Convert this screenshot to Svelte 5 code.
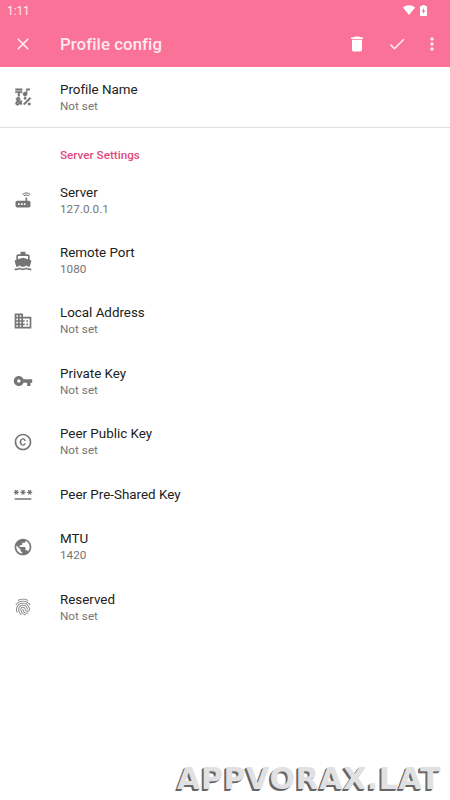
<script>
    const icons = {
        symbols: "M3 2h8v2H3zM6 11h2V7h3V5H3v2h3zM12.404 20.182l7.778-7.778 1.414 1.414-7.778 7.778zM14.5 12a1.5 1.5 0 1 0 0 3 1.5 1.5 0 0 0 0-3zM19.5 19a1.5 1.5 0 1 0 0 3 1.5 1.5 0 0 0 0-3zM14.5 11c1.38 0 2.5-1.12 2.5-2.5V4h3V2h-4v4.51c-.42-.32-.93-.51-1.5-.51C13.12 6 12 7.12 12 8.5s1.12 2.5 2.5 2.5zM9.74 15.96l-1.41 1.41-.71-.71.35-.35c.98-.98.98-2.56 0-3.54-.49-.49-1.13-.73-1.77-.73s-1.28.24-1.77.73c-.98.98-.98 2.56 0 3.54l.35.35-1.06 1.06c-.98.98-.98 2.56 0 3.54.49.5 1.13.74 1.77.74s1.28-.24 1.77-.73l1.06-1.06 1.41 1.41 1.41-1.41-1.41-1.41 1.41-1.41-1.4-1.43zm-3.89-1.77c.12-.12.26-.15.35-.15s.23.03.35.15c.19.2.19.51 0 .71l-.35.35-.35-.36c-.2-.19-.2-.51 0-.7zm0 5.65c-.12.12-.26.15-.35.15s-.23-.03-.35-.15c-.19-.2-.19-.51 0-.71l1.06-1.06.71.71-1.07 1.06z",
        router: "M20.2 5.9l.8-.8C19.6 3.7 17.8 3 16 3s-3.6.7-5 2.1l.8.8C13 4.8 14.5 4.2 16 4.2s3 .6 4.2 1.7zm-.9.8c-.9-.9-2.1-1.4-3.3-1.4s-2.4.5-3.3 1.4l.8.8c.7-.7 1.6-1 2.5-1 .9 0 1.8.3 2.5 1l.8-.8zM19 13h-2V9h-2v4H5c-1.1 0-2 .9-2 2v4c0 1.1.9 2 2 2h14c1.1 0 2-.9 2-2v-4c0-1.1-.9-2-2-2zM8 18H6v-2h2v2zm3.5 0h-2v-2h2v2zm3.5 0h-2v-2h2v2z",
        boat: "M20 21c-1.39 0-2.78-.47-4-1.32-2.44 1.71-5.56 1.71-8 0C6.78 20.53 5.39 21 4 21H2v2h2c1.38 0 2.74-.35 4-.99 2.52 1.29 5.48 1.29 8 0 1.26.65 2.62.99 4 .99h2v-2h-2zM3.95 19H4c1.6 0 3.02-.88 4-2 .98 1.12 2.4 2 4 2s3.02-.88 4-2c.98 1.12 2.4 2 4 2h.05l1.89-6.68c.08-.26.06-.54-.06-.78s-.34-.42-.6-.5L20 10.62V6c0-1.1-.9-2-2-2h-3V1H9v3H6c-1.1 0-2 .9-2 2v4.62l-1.29.42c-.26.08-.48.26-.6.5s-.15.52-.06.78L3.95 19zM6 6h12v3.97L12 8 6 9.97V6z",
        domain: "M12 7V3H2v18h20V7H12zM6 19H4v-2h2v2zm0-4H4v-2h2v2zm0-4H4V9h2v2zm0-4H4V5h2v2zm4 12H8v-2h2v2zm0-4H8v-2h2v2zm0-4H8V9h2v2zm0-4H8V5h2v2zm10 12h-8v-2h2v-2h-2v-2h2v-2h-2V9h8v10zm-2-8h-2v2h2v-2zm0 4h-2v2h2v-2z",
        key: "M12.65 10C11.83 7.67 9.61 6 7 6c-3.31 0-6 2.69-6 6s2.69 6 6 6c2.61 0 4.83-1.67 5.65-4H17v4h4v-4h2v-4H12.65zM7 14c-1.1 0-2-.9-2-2s.9-2 2-2 2 .9 2 2-.9 2-2 2z",
        copyright: "M10.08 10.86c.05-.33.16-.62.3-.87s.34-.46.59-.62c.24-.15.54-.22.91-.23.23.01.44.05.63.13.2.09.38.21.52.36s.25.33.34.53.13.42.14.64h1.79c-.02-.47-.11-.9-.28-1.29s-.4-.73-.7-1.01-.66-.5-1.08-.66-.88-.23-1.39-.23c-.65 0-1.22.11-1.7.34s-.88.53-1.2.92-.56.84-.71 1.36S8 11.29 8 11.87v.27c0 .58.08 1.12.23 1.64s.39.97.71 1.35.72.69 1.2.91 1.05.34 1.7.34c.47 0 .91-.08 1.32-.23s.77-.36 1.08-.63.56-.58.74-.94.29-.74.3-1.15h-1.79c-.01.21-.06.4-.15.58s-.21.33-.36.46-.32.23-.52.3c-.19.07-.39.09-.6.1-.36-.01-.66-.08-.89-.23-.25-.16-.45-.37-.59-.62s-.25-.55-.3-.88-.08-.67-.08-1v-.27c0-.35.03-.68.08-1.01zM12 2C6.48 2 2 6.48 2 12s4.48 10 10 10 10-4.48 10-10S17.52 2 12 2zm0 18c-4.41 0-8-3.59-8-8s3.59-8 8-8 8 3.59 8 8-3.59 8-8 8z",
        password: "M2 17h20v2H2v-2zm1.15-4.05L4 11.47l.85 1.48 1.3-.75-.85-1.48H7v-1.5H5.3l.85-1.47L4.85 7 4 8.47 3.15 7l-1.3.75.85 1.47H1v1.5h1.7l-.85 1.48 1.3.75zm6.7-.75l1.3.75.85-1.48.85 1.48 1.3-.75-.85-1.48H15v-1.5h-1.7l.85-1.47-1.3-.75L12 8.47 11.15 7l-1.3.75.85 1.47H9v1.5h1.7l-.85 1.48zM23 9.22h-1.7l.85-1.47-1.3-.75L20 8.47 19.15 7l-1.3.75.85 1.47H17v1.5h1.7l-.85 1.48 1.3.75.85-1.48.85 1.48 1.3-.75-.85-1.48H23v-1.5z",
        globe: "M12 2C6.48 2 2 6.48 2 12s4.48 10 10 10 10-4.48 10-10S17.52 2 12 2zm-1 17.93c-3.95-.49-7-3.85-7-7.93 0-.62.08-1.21.21-1.79L9 15v1c0 1.1.9 2 2 2v1.93zm6.9-2.54c-.26-.81-1-1.39-1.9-1.39h-1v-3c0-.55-.45-1-1-1H8v-2h2c.55 0 1-.45 1-1V7h2c1.1 0 2-.9 2-2v-.41c2.93 1.19 5 4.06 5 7.41 0 2.08-.8 3.97-2.1 5.39z",
        fingerprint: "M17.81 4.47c-.08 0-.16-.02-.23-.06C15.66 3.42 14 3 12.01 3c-1.98 0-3.86.47-5.57 1.41-.24.13-.54.04-.68-.2-.13-.24-.04-.55.2-.68C7.82 2.52 9.86 2 12.01 2c2.13 0 3.99.47 6.03 1.52.25.13.34.43.21.67-.09.18-.26.28-.44.28zM3.5 9.72c-.1 0-.2-.03-.29-.09-.23-.16-.28-.47-.12-.7.99-1.4 2.25-2.5 3.75-3.27C9.98 4.04 14 4.03 17.15 5.65c1.5.77 2.76 1.86 3.75 3.25.16.22.11.54-.12.7-.23.16-.54.11-.7-.12-.9-1.26-2.04-2.25-3.39-2.94-2.87-1.47-6.54-1.47-9.4.01-1.36.7-2.5 1.7-3.4 2.96-.08.14-.23.21-.39.21zm6.25 12.07c-.13 0-.26-.05-.35-.15-.87-.87-1.34-1.43-2.01-2.64-.69-1.23-1.05-2.73-1.05-4.34 0-2.97 2.54-5.39 5.66-5.39s5.66 2.42 5.66 5.39c0 .28-.22.5-.5.5s-.5-.22-.5-.5c0-2.42-2.09-4.39-4.66-4.39-2.57 0-4.66 1.97-4.66 4.39 0 1.44.32 2.77.93 3.85.64 1.15 1.08 1.64 1.85 2.42.19.2.19.51 0 .71-.11.1-.24.15-.37.15zm7.17-1.85c-1.19 0-2.24-.3-3.1-.89-1.49-1.01-2.38-2.65-2.38-4.39 0-.28.22-.5.5-.5s.5.22.5.5c0 1.41.72 2.74 1.94 3.56.71.48 1.54.71 2.54.71.24 0 .64-.03 1.04-.1.27-.05.53.13.58.41.05.27-.13.53-.41.58-.57.11-1.07.12-1.21.12zM14.91 22c-.04 0-.09-.01-.13-.02-1.59-.44-2.63-1.03-3.72-2.1-1.4-1.39-2.17-3.24-2.17-5.22 0-1.62 1.38-2.94 3.08-2.94 1.7 0 3.08 1.32 3.08 2.94 0 1.07.93 1.94 2.08 1.94s2.08-.87 2.08-1.94c0-3.77-3.25-6.83-7.25-6.83-2.84 0-5.44 1.58-6.61 4.03-.39.81-.59 1.76-.59 2.8 0 .78.07 2.01.67 3.61.1.26-.03.55-.29.64-.26.1-.55-.04-.64-.29-.49-1.31-.73-2.61-.73-3.96 0-1.2.23-2.29.68-3.24 1.33-2.79 4.28-4.6 7.51-4.6 4.55 0 8.25 3.51 8.25 7.83 0 1.62-1.38 2.94-3.08 2.94s-3.08-1.32-3.08-2.94c0-1.07-.93-1.94-2.08-1.94s-2.08.87-2.08 1.94c0 1.71.66 3.31 1.87 4.51.95.94 1.86 1.46 3.27 1.85.27.07.42.35.35.61-.05.23-.26.38-.47.38z",
        close: "M19 6.41L17.59 5 12 10.59 6.41 5 5 6.41 10.59 12 5 17.59 6.41 19 12 13.41 17.59 19 19 17.59 13.41 12z",
        trash: "M6 19c0 1.1.9 2 2 2h8c1.1 0 2-.9 2-2V7H6v12zM19 4h-3.5l-1-1h-5l-1 1H5v2h14V4z",
        check: "M9 16.17L4.83 12l-1.42 1.41L9 19 21 7l-1.41-1.41z",
        more: "M12 8c1.1 0 2-.9 2-2s-.9-2-2-2-2 .9-2 2 .9 2 2 2zm0 2c-1.1 0-2 .9-2 2s.9 2 2 2 2-.9 2-2-.9-2-2-2zm0 6c-1.1 0-2 .9-2 2s.9 2 2 2 2-.9 2-2-.9-2-2-2z",
    };

    const profile = [{ icon: "symbols", title: "Profile Name", value: "Not set" }];

    const server = [
        { icon: "router", title: "Server", value: "127.0.0.1" },
        { icon: "boat", title: "Remote Port", value: "1080" },
        { icon: "domain", title: "Local Address", value: "Not set" },
        { icon: "key", title: "Private Key", value: "Not set" },
        { icon: "copyright", title: "Peer Public Key", value: "Not set" },
        { icon: "password", title: "Peer Pre-Shared Key" },
        { icon: "globe", title: "MTU", value: "1420" },
        { icon: "fingerprint", title: "Reserved", value: "Not set" },
    ];
</script>

{#snippet icon(name)}
    <svg class="icon {name}" viewBox="0 0 24 24"><path d={icons[name]} /></svg>
{/snippet}

{#snippet preference(item)}
    <div class="row" class:single={!item.value}>
        {@render icon(item.icon)}
        <div class="text">
            <div class="title">{item.title}</div>
            {#if item.value}
                <div class="value">{item.value}</div>
            {/if}
        </div>
    </div>
{/snippet}

<div class="screen">
    <header>
        <div class="status">
            <span class="time">1:11</span>
            <svg class="wifi" viewBox="0 0 12 10"><path d="M0 2.6C3.4-.5 8.6-.5 12 2.6L6 10z" /></svg>
            <svg class="battery" viewBox="0 0 7 11">
                <path fill-rule="evenodd" d="M2.2 0h2.6v1H6.3c.4 0 .7.3.7.7v8.6c0 .4-.3.7-.7.7H.7c-.4 0-.7-.3-.7-.7V1.7C0 1.3.3 1 .7 1h1.5zM4 3L1.6 6.6H3V9l2.4-3.6H4z" />
            </svg>
        </div>
        <div class="toolbar">
            {@render icon("close")}
            <h1>Profile config</h1>
            <div class="actions">
                {@render icon("trash")}
                {@render icon("check")}
                {@render icon("more")}
            </div>
        </div>
    </header>

    <section class="profile">
        {#each profile as item}
            {@render preference(item)}
        {/each}
    </section>

    <section>
        <h2>Server Settings</h2>
        {#each server as item}
            {@render preference(item)}
        {/each}
    </section>

    <div class="watermark">APPVORAX.LAT</div>
</div>

<style>
    :global(body) {
        background: #fff;
    }
    .screen {
        position: relative;
        width: 450px;
        height: 800px;
        overflow: hidden;
        background: #fff;
        font-family: Roboto, sans-serif;
    }
    header {
        height: 66.6px;
        background: #fb7299;
        color: #ffe9ef;
    }
    .status {
        display: flex;
        align-items: center;
        height: 20px;
        padding: 0 23px 0 7px;
    }
    .time {
        flex: 1;
        font-size: 12px;
        line-height: 20px;
        letter-spacing: -0.1px;
        padding-top: 1px;
    }
    .status svg {
        fill: #fff;
    }
    .wifi {
        width: 12px;
        height: 10px;
        margin-right: 5px;
    }
    .battery {
        width: 7px;
        height: 11px;
    }
    .icon {
        flex: none;
        width: 20px;
        height: 20px;
        fill: #757575;
    }
    .symbols {
        stroke: #757575;
        stroke-width: 0.5;
    }
    .toolbar {
        display: flex;
        align-items: center;
        height: 47px;
        padding: 0 8px 0 13px;
    }
    .toolbar .icon {
        fill: #ffe9ef;
    }
    h1 {
        flex: 1;
        margin: 0 0 0 27px;
        font-size: 16.8px;
        font-weight: 500;
        line-height: 20px;
        letter-spacing: 0.08px;
    }
    .actions {
        display: flex;
        gap: 20px;
    }
    .actions .trash {
        fill: #fff;
    }
    .actions .more {
        margin-left: -5px;
    }
    .profile {
        border-bottom: 1px solid #e0e0e0;
    }
    .profile .text {
        padding-top: 1px;
    }
    .row {
        display: flex;
        align-items: center;
        height: 60.4px;
        padding-left: 13.4px;
    }
    .row.single {
        height: 44.8px;
    }
    .text {
        margin-left: 26.6px;
    }
    .title {
        color: #212121;
        font-size: 13.4px;
        line-height: 17px;
        letter-spacing: -0.01px;
    }
    .value {
        color: #757575;
        font-size: 11.7px;
        line-height: 16px;
        letter-spacing: 0.03px;
    }
    h2 {
        margin: 0;
        padding: 19.4px 0 6.6px 60px;
        color: #e04c80;
        font-size: 11.7px;
        font-weight: 500;
        line-height: 16px;
    }
    /* stamped over the bottom corner */
    .watermark {
        position: absolute;
        right: 9px;
        bottom: 3px;
        color: #e1e1e1;
        font: bold 30px/36px "DejaVu Sans", sans-serif;
        letter-spacing: 0.6px;
        text-shadow: -1px 1px #666, -2px 2px #666;
    }
</style>
